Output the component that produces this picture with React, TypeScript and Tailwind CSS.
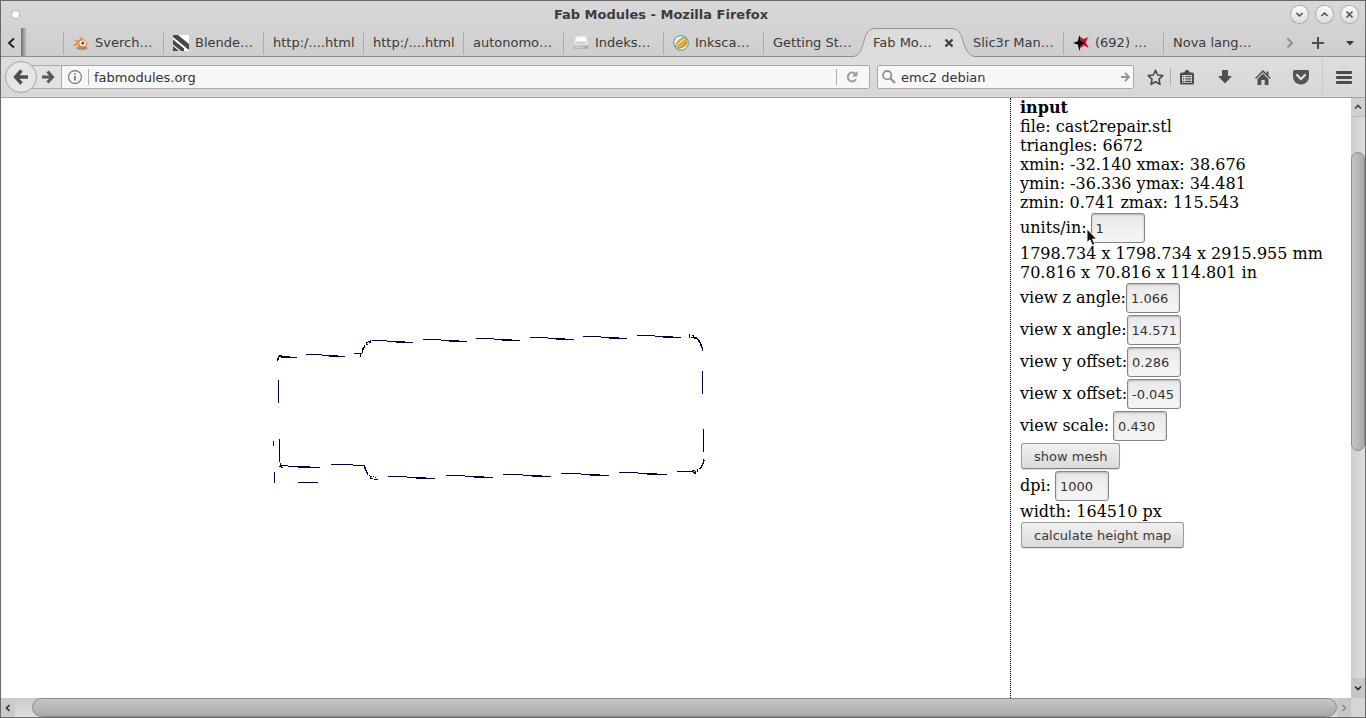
import { useState } from "react";
import type { ReactNode } from "react";

interface Tab {
  id: number;
  title: string;
  icon?: ReactNode;
  active?: boolean;
  separator?: boolean;
}

function BlenderIcon() {
  return (
    <svg width="16" height="16" viewBox="0 0 16 16" className="shrink-0">
      <ellipse cx="9" cy="13" rx="5.5" ry="1.8" fill="#8f8f8f" />
      <path
        d="M7.2 2 L13.2 6.2 Q15.6 9.4 12.4 11.8 Q8.5 13.6 5.3 11.2 L4.6 9.6 L1.6 11.5 L.4 10.2 L5 6.6 H1.8 V5.2 H8.2 L6 3 Z"
        fill="#ea8a30"
      />
      <ellipse cx="9.7" cy="8.2" rx="3.2" ry="2.8" fill="#fff" />
      <circle cx="9.8" cy="8.1" r="1.7" fill="#2a5f9c" />
    </svg>
  );
}

function StripesIcon() {
  return (
    <svg width="16" height="16" viewBox="0 0 16 16" className="shrink-0">
      <rect width="16" height="16" fill="#fff" />
      <path d="M0 0 H5 L16 9 V15 L0 2 Z" fill="#474747" />
      <path d="M0 4.5 L11 13.5 V16 H8 L0 9.5 Z" fill="#474747" />
      <path d="M0 11 L6 16 H0 Z" fill="#474747" />
    </svg>
  );
}

function DriveIcon() {
  return (
    <svg width="16" height="16" viewBox="0 0 16 16" className="shrink-0">
      <path d="M2.8 1 H13.2 L15.5 9.5 H.5 Z" fill="#e9e9e9" />
      <ellipse cx="8" cy="4.5" rx="5" ry="2.8" fill="#fafafa" />
      <ellipse cx="8" cy="7.6" rx="6" ry="1.2" fill="#cfcfcf" />
      <rect x=".4" y="9.3" width="15.2" height="4.7" rx="1" fill="#b4b4ba" />
      <rect x="1" y="9.3" width="14" height="1" fill="#f0f0f0" />
      <rect x="2" y="11.5" width="8" height="1.2" fill="#d8d8dc" />
      <rect x="12" y="11" width="2" height="2" fill="#6fc94a" />
    </svg>
  );
}

function InkIcon() {
  return (
    <svg width="16" height="16" viewBox="0 0 16 16" className="shrink-0">
      <circle cx="8" cy="8" r="7.3" fill="#f2f2ee" stroke="#3d93c0" strokeWidth="1" />
      <path
        d="M2.4 12.6 C2.2 7.5 7 2.4 12.6 2.2 C14.4 5 13 7.8 9.8 9.2 C7 10.4 4.5 11 2.4 12.6 Z"
        fill="#dcab35"
        stroke="#8c6a16"
        strokeWidth=".5"
      />
      <path d="M3.4 10.5 L11.6 3.8" stroke="#f6df95" strokeWidth="1.2" />
      <path d="M4.6 13 C8.6 12.6 12.2 10.8 13.8 7.2" stroke="#c08f20" strokeWidth="2" fill="none" />
    </svg>
  );
}

function StarsIcon() {
  return (
    <svg width="16" height="16" viewBox="0 0 16 16" className="shrink-0">
      <path d="M8 5 L7 1.5 L10.5 4 L15.5 2 L12.7 7 L15.8 13 L11 10.5 L7.5 13 Z" fill="#cf0a37" />
      <path d="M6.5 0 L8 6.3 L12 8 L8 9.5 L6.5 16 L4.8 9.5 L0 8 L4.8 6.3 Z" fill="#000" />
    </svg>
  );
}

const TABS: Tab[] = [
  { id: 1, title: "Sverch…", icon: <BlenderIcon />, separator: true },
  { id: 2, title: "Blende…", icon: <StripesIcon />, separator: true },
  { id: 3, title: "http:/....html", separator: true },
  { id: 4, title: "http:/....html", separator: true },
  { id: 5, title: "autonomo…", separator: true },
  { id: 6, title: "Indeks…", icon: <DriveIcon />, separator: true },
  { id: 7, title: "Inksca…", icon: <InkIcon />, separator: true },
  { id: 8, title: "Getting St…", separator: true },
  { id: 9, title: "Fab Mo…", active: true },
  { id: 10, title: "Slic3r Man…" },
  { id: 11, title: "(692) …", icon: <StarsIcon />, separator: true },
  { id: 12, title: "Nova lang…", separator: true },
];

function WindowButton({ label, d }: { label: string; d: string }) {
  return (
    <button aria-label={label} className="h-[17px] w-[17px] rounded-full bg-linear-to-b from-[#fbfbfb] to-[#dcdcdc] shadow-[0_0_0_1px_#a9a9a9]">
      <svg width="17" height="17" viewBox="0 0 17 17" fill="none" stroke="#4a4a4a" strokeWidth="1.5">
        <path d={d} />
      </svg>
    </button>
  );
}

function TitleBar() {
  return (
    <header className="flex h-[27px] shrink-0 items-center pr-[7px] pl-[11px]">
      <span className="h-[7px] w-[7px] rounded-full bg-white shadow-[0_0_1px_1px_#b5b5b5]" />
      <h1 className="flex-1 pl-3 text-center text-[13px] font-bold text-[#3c3c3c]">Fab Modules - Mozilla Firefox</h1>
      <div className="flex gap-2">
        <WindowButton label="Minimize" d="M5.5 7 L8.5 10 L11.5 7" />
        <WindowButton label="Maximize" d="M5.5 10 L8.5 7 L11.5 10" />
        <WindowButton label="Close" d="M5.5 5.5 L11.5 11.5 M11.5 5.5 L5.5 11.5" />
      </div>
    </header>
  );
}

function TabItem({ tab }: { tab: Tab }) {
  if (tab.active) {
    return (
      <li className="relative z-10 flex h-full w-[100px] shrink-0 items-center">
        <svg className="absolute top-0 -left-[10px]" width="122" height="30" viewBox="0 0 122 30">
          <path
            d="M0 28.5 C7 28 9 20 11 13 C13 5 16 .5 22 .5 H98 C105 .5 108 5 110 13 C112 20 115 28 122 28.5 V30 H0 Z"
            fill="#dcdcdc"
          />
          <path
            d="M0 28.5 C7 28 9 20 11 13 C13 5 16 .5 22 .5 H98 C105 .5 108 5 110 13 C112 20 115 28 122 28.5"
            fill="none"
            stroke="#8f9398"
          />
        </svg>
        <button className="relative flex-1 pt-[2px] pl-[10px] text-left">{tab.title}</button>
        <button aria-label="Close tab" className="relative mr-[9px] pt-[2px]">
          <svg width="10" height="10" viewBox="0 0 10 10" stroke="#444" strokeWidth="2.4">
            <path d="M1.5 1.5 L8.5 8.5 M8.5 1.5 L1.5 8.5" />
          </svg>
        </button>
      </li>
    );
  }
  return (
    <li className="flex h-full w-[100px] shrink-0 items-center">
      <span className={tab.separator ? "mt-[2px] h-[22px] w-px bg-[#ababab]" : "w-px"} />
      <button className="flex flex-1 items-center gap-[6px] pt-[2px] pl-[9px] whitespace-nowrap">
        {tab.icon}
        {tab.title}
      </button>
    </li>
  );
}

function TabStrip() {
  return (
    <nav className="flex h-[29px] shrink-0 border-b border-[#8e8e8e] text-[13px] text-[#3a3a3a]">
      <button aria-label="Scroll tabs left" className="flex w-5 items-center justify-center pt-[2px]">
        <svg width="10" height="12" viewBox="0 0 10 12" fill="none" stroke="#222" strokeWidth="2">
          <path d="M8 1.5 L3 6 L8 10.5" />
        </svg>
      </button>
      <span className="w-[6px] bg-linear-to-r from-[#6e6e6e] to-transparent" />
      <ul className="flex flex-1 pl-9">
        {TABS.map((tab) => (
          <TabItem key={tab.id} tab={tab} />
        ))}
      </ul>
      <div className="flex items-center pt-[2px]">
        <button aria-label="Scroll tabs right" className="flex w-7 justify-center">
          <svg width="10" height="12" viewBox="0 0 10 12" fill="none" stroke="#8f8f8f" strokeWidth="2">
            <path d="M2.5 1.5 L7 6 L2.5 10.5" />
          </svg>
        </button>
        <button aria-label="New tab" className="flex w-7 justify-center">
          <svg width="12" height="12" viewBox="0 0 12 12" stroke="#4c4c4c" strokeWidth="2">
            <path d="M6 0 V12 M0 6 H12" />
          </svg>
        </button>
        <button aria-label="List all tabs" className="flex w-[33px] justify-center pl-[3px]">
          <svg width="8" height="5" viewBox="0 0 8 5" fill="#2d3a48">
            <path d="M0 0 H8 L4 4.5 Z" />
          </svg>
        </button>
      </div>
    </nav>
  );
}

function NavBar() {
  const [url, setUrl] = useState("fabmodules.org");
  const [query, setQuery] = useState("emc2 debian");

  return (
    <div className="flex h-[41px] shrink-0 items-center border-b border-[#a5a5a5] bg-linear-to-b from-[#dedede] to-[#d7d7d7] pl-1 text-[13px] text-[#333]">
      <button aria-label="Back" className="z-10 flex h-8 w-8 shrink-0 items-center justify-center rounded-full border border-[#a3a3a3] bg-[#e6e6e6]">
        <svg width="16" height="16" viewBox="0 0 16 16" fill="none" stroke="#4d4d4d" strokeWidth="3.4">
          <path d="M8.5 1.5 L2.6 8 L8.5 14.5 M3 8 H15" />
        </svg>
      </button>
      <div className="-ml-2 flex h-6 flex-1 items-center rounded-r-xs border border-[#a9a9a9] bg-[#f7f7f7]">
        <button aria-label="Forward" className="flex h-full w-8 items-center justify-end border-r border-[#a9a9a9] bg-[#e2e2e2] pr-[6px]">
          <svg width="14" height="14" viewBox="0 0 14 14" fill="none" stroke="#5a5a5a" strokeWidth="3">
            <path d="M6.5 1.5 L11.6 7 L6.5 12.5 M1 7 H11.5" />
          </svg>
        </button>
        <button aria-label="Site information" className="flex h-4 w-[27px] items-center justify-center border-r border-[#b0b0b0]">
          <svg width="14" height="14" viewBox="0 0 14 14" fill="none" stroke="#707070">
            <circle cx="7" cy="7" r="6.4" strokeWidth="1.1" />
            <path d="M7 6 V10.5 M7 3.2 V4.8" strokeWidth="1.7" />
          </svg>
        </button>
        <input
          aria-label="Address"
          className="min-w-0 flex-1 bg-transparent pt-[2px] pl-[5px] outline-none"
          value={url}
          onChange={(e) => setUrl(e.target.value)}
        />
        <button aria-label="Reload" className="flex h-4 w-[33px] items-center justify-center border-l border-[#b0b0b0] pr-[2px]">
          <svg width="12" height="12" viewBox="0 0 12 12" fill="none" stroke="#93a0ab" strokeWidth="2">
            <path d="M9.2 2.8 A4.4 4.4 0 1 0 10 8.2" />
            <path d="M11.5 0 V5.5 H6 Z" fill="#93a0ab" stroke="none" />
          </svg>
        </button>
      </div>

      <div className="ml-[7px] flex h-6 w-[257px] shrink-0 items-center rounded-xs border border-[#a9a9a9] bg-[#f7f7f7]">
        <svg width="14" height="14" viewBox="0 0 14 14" fill="none" stroke="#949494" className="ml-1 shrink-0">
          <circle cx="5.2" cy="5.2" r="4.2" strokeWidth="1.8" />
          <path d="M8.4 8.4 L13 13" strokeWidth="2.4" />
        </svg>
        <input
          aria-label="Search"
          className="min-w-0 flex-1 bg-transparent pt-[2px] pl-[5px] outline-none"
          value={query}
          onChange={(e) => setQuery(e.target.value)}
        />
        <button aria-label="Go" className="mr-[3px]">
          <svg width="9" height="10" viewBox="0 0 9 10" fill="none" stroke="#8696a5" strokeWidth="1.8">
            <path d="M4 1 L8 5 L4 9 M0 5 H8" />
          </svg>
        </button>
      </div>

      <button aria-label="Bookmark this page" className="ml-2 flex w-7 justify-center pr-px">
        <svg width="17" height="17" viewBox="0 0 17 17" fill="none" stroke="#4b4b4b" strokeWidth="1.6" strokeLinejoin="round">
          <path d="M8.5 1.3 L10.7 6 L15.8 6.6 L12 10.1 L13 15.3 L8.5 12.7 L4 15.3 L5 10.1 L1.2 6.6 L6.3 6 Z" />
        </svg>
      </button>
      <span className="h-[18px] w-px bg-[#b0b0b0]" />
      <button aria-label="Show bookmarks" className="flex w-[35px] justify-center pr-[3px]">
        <svg width="14" height="15" viewBox="0 0 14 15">
          <path d="M4 2.5 L6 0 H8 L10 2.5 H12.5 Q14 2.5 14 4 V13 Q14 14.5 12.5 14.5 H1.5 Q0 14.5 0 13 V4 Q0 2.5 1.5 2.5 Z" fill="#4b4b4b" />
          <path d="M2 5 H12 V12.7 H2 Z" fill="#dcdcdc" />
          <path d="M2.7 6.5 H4.2 M5.2 6.5 H11.4 M2.7 8.9 H4.2 M5.2 8.9 H11.4 M2.7 11.3 H4.2 M5.2 11.3 H11.4" stroke="#4b4b4b" strokeWidth="1.2" />
        </svg>
      </button>
      <button aria-label="Downloads" className="flex w-[38px] justify-center">
        <svg width="14" height="14" viewBox="0 0 14 14" fill="#505050">
          <path d="M4 0 H10 V6 H14 L7 13.5 L0 6 H4 Z" />
        </svg>
      </button>
      <button aria-label="Home" className="flex w-[38px] justify-center">
        <svg width="16" height="15" viewBox="0 0 16 15" fill="#505050">
          <path d="M8 0 L11.5 3.5 V1.5 H13.5 V5.5 L16 8 L15 9 L8 2.2 L1 9 L0 8 Z" />
          <path d="M8 3.6 L13.5 9 V15 H9.7 V10 H6.3 V15 H2.5 V9 Z" />
        </svg>
      </button>
      <button aria-label="Save to Pocket" className="flex w-[38px] justify-center">
        <svg width="16" height="15" viewBox="0 0 16 15">
          <path d="M1.5 0 H14.5 Q16 0 16 1.5 V6.5 A8 8 0 0 1 0 6.5 V1.5 Q0 0 1.5 0 Z" fill="#555" />
          <path d="M4 5 L8 9 L12 5" fill="none" stroke="#e4e4e4" strokeWidth="2.2" strokeLinecap="round" />
        </svg>
      </button>
      <span className="ml-[2px] h-[34px] w-px bg-[#c8c8c8]" />
      <button aria-label="Open menu" className="flex w-[42px] justify-center">
        <svg width="16" height="13" viewBox="0 0 16 13" fill="#4a4a4a">
          <rect width="16" height="3" rx="1" />
          <rect y="5" width="16" height="3" rx="1" />
          <rect y="10" width="16" height="3" rx="1" />
        </svg>
      </button>
    </div>
  );
}

// [x, y, length] runs of the mesh outline
const HORIZONTAL = [
  [279, 355, 3], [278, 356, 12], [281, 357, 16],
  [306, 354, 16], [322, 355, 16], [329, 356, 16], [354, 353, 8],
  [372, 340, 15], [387, 341, 18], [396, 342, 17],
  [423, 339, 18], [441, 340, 18], [449, 341, 18],
  [476, 338, 18], [494, 339, 18], [502, 340, 18],
  [530, 337, 18], [548, 338, 17], [556, 339, 18],
  [583, 336, 18], [601, 337, 18], [609, 338, 18],
  [637, 335, 18], [655, 336, 18], [663, 337, 18],
  [691, 337, 6], [692, 335, 2], [693, 336, 1], [694, 338, 4], [697, 339, 2],
  [280, 465, 8], [288, 466, 22], [298, 467, 22], [279, 466, 3], [281, 467, 2],
  [331, 464, 22], [353, 465, 12], [298, 482, 20],
  [388, 476, 19], [407, 477, 19], [416, 478, 19],
  [446, 475, 19], [465, 476, 19], [474, 477, 19],
  [503, 474, 20], [523, 475, 19], [532, 476, 19],
  [561, 473, 20], [581, 474, 19], [590, 475, 19],
  [619, 472, 19], [638, 473, 19], [647, 474, 20],
  [677, 471, 17], [692, 470, 3], [693, 472, 3], [694, 473, 2], [695, 471, 1],
  [370, 340, 1], [368, 341, 2], [366, 342, 2], [367, 344, 1], [369, 342, 1],
  [367, 474, 1], [369, 475, 1], [371, 476, 1], [371, 478, 2], [374, 479, 4], [373, 476, 1], [375, 477, 1],
];

const VERTICAL = [
  [278, 356, 4], [277, 358, 3], [360, 353, 4],
  [362, 348, 5], [363, 347, 3], [364, 345, 3], [366, 343, 2], [370, 341, 2],
  [278, 380, 23], [279, 439, 23], [273, 441, 5], [274, 472, 11],
  [280, 463, 3], [364, 465, 4], [365, 467, 4], [366, 470, 3], [367, 472, 3], [370, 476, 3],
  [689, 334, 4], [698, 339, 3], [699, 340, 3], [700, 342, 4], [701, 344, 4], [702, 347, 4],
  [702, 371, 23], [703, 429, 23],
  [703, 459, 5], [704, 460, 1], [702, 463, 3], [701, 465, 3], [700, 467, 2], [699, 468, 1], [697, 469, 3],
];

function MeshCanvas() {
  return (
    <svg className="h-full w-full" viewBox="1 98 1009 600" preserveAspectRatio="xMinYMin meet" shapeRendering="crispEdges" fill="#000040">
      {HORIZONTAL.map(([x, y, length]) => (
        <rect key={`h${x}-${y}`} x={x} y={y} width={length} height="1" />
      ))}
      {VERTICAL.map(([x, y, length]) => (
        <rect key={`v${x}-${y}`} x={x} y={y} width="1" height={length} />
      ))}
    </svg>
  );
}

function Field({ id, label, value, spaced }: { id: string; label: string; value: string; spaced?: boolean }) {
  const [text, setText] = useState(value);
  return (
    <div className="flex h-8 items-center">
      <label htmlFor={id} className={spaced ? "mr-1 pb-[2px]" : "pb-[2px]"}>
        {label}
      </label>
      <input
        id={id}
        value={text}
        onChange={(e) => setText(e.target.value)}
        className="h-[30px] w-[54px] rounded-[3px] border border-[#858585] bg-linear-to-b from-[#e8e8e8] to-[#f6f6f6] px-1 font-['DejaVu_Sans',sans-serif] text-[13px] text-[#333] shadow-[inset_0_1px_2px_#b5b5b5] outline-none"
      />
    </div>
  );
}

function PanelButton({ children }: { children: ReactNode }) {
  return (
    <button className="my-px ml-px block h-[26px] rounded-[3px] border border-[#9a9a9a] border-b-[#808080] bg-linear-to-b from-[#f1f1f1] to-[#dadada] px-3 pt-[2px] font-['DejaVu_Sans',sans-serif] text-[13px] leading-4 text-[#3a3a3a] shadow-[0_1px_1px_#dddddd]">
      {children}
    </button>
  );
}

function InputPanel() {
  return (
    <aside className="w-[341px] shrink-0 border-l border-dotted border-black pl-[9px] font-['DejaVu_Serif',serif] text-base leading-[19px] text-black">
      <h2 className="font-bold">input</h2>
      <p>file: cast2repair.stl</p>
      <p>triangles: 6672</p>
      <p>xmin: -32.140 xmax: 38.676</p>
      <p>ymin: -36.336 ymax: 34.481</p>
      <p>zmin: 0.741 zmax: 115.543</p>
      <div className="relative">
        <Field id="units" label="units/in:" value="1" spaced />
        {/* mouse pointer */}
        <svg className="absolute top-4 left-[66px]" width="12" height="19" viewBox="0 0 12 19">
          <path d="M1 1 V14.5 L4 11.8 L6.3 17.3 L8.8 16.2 L6.5 11 H10.6 Z" fill="#111" stroke="#fff" strokeWidth=".9" />
        </svg>
      </div>
      <p>1798.734 x 1798.734 x 2915.955 mm</p>
      <p>70.816 x 70.816 x 114.801 in</p>
      <Field id="rz" label="view z angle:" value="1.066" />
      <Field id="rx" label="view x angle:" value="14.571" />
      <Field id="dy" label="view y offset:" value="0.286" />
      <Field id="dx" label="view x offset:" value="-0.045" />
      <Field id="scale" label="view scale:" value="0.430" spaced />
      <PanelButton>show mesh</PanelButton>
      <Field id="dpi" label="dpi:" value="1000" spaced />
      <p>width: 164510 px</p>
      <PanelButton>calculate height map</PanelButton>
    </aside>
  );
}

function Arrow({ d, color }: { d: string; color: string }) {
  return (
    <svg width="8" height="8" viewBox="0 0 8 8" fill="none" stroke={color} strokeWidth="1.6">
      <path d={d} />
    </svg>
  );
}

function VerticalScrollbar() {
  return (
    <div className="flex w-[14px] shrink-0 flex-col bg-linear-to-r from-[#cdcdcd] to-[#dedede]">
      <button aria-label="Scroll up" className="flex h-[19px] items-center justify-center border-b border-[#bdbdbd] bg-[#d0d0d0]">
        <Arrow d="M1 5.5 L4 2.5 L7 5.5" color="#3c3c3c" />
      </button>
      <div className="flex-[35]" />
      <div className="flex-[298] rounded-full border border-[#8b8b8b] bg-linear-to-r from-[#c6c6c6] to-[#a9a9a9]" />
      <div className="flex-[228]" />
      <button aria-label="Scroll down" className="flex h-5 items-center justify-center bg-[#c6c6c6]">
        <Arrow d="M1 2.5 L4 5.5 L7 2.5" color="#2b2b2b" />
      </button>
    </div>
  );
}

function HorizontalScrollbar() {
  return (
    <div className="flex h-[19px] shrink-0 bg-linear-to-b from-[#cbcbcb] to-[#dedede]">
      <button aria-label="Scroll left" className="flex w-[14px] items-center justify-center bg-[#cacaca]">
        <Arrow d="M5.5 1 L2.5 4 L5.5 7" color="#2b2b2b" />
      </button>
      <div className="w-[17px]" />
      <div className="flex-1 rounded-full border border-[#8b8b8b] bg-linear-to-b from-[#c6c6c6] to-[#a9a9a9]" />
      <button aria-label="Scroll right" className="flex w-[14px] items-center justify-center bg-[#c6c6c6]">
        <Arrow d="M2.5 1 L5.5 4 L2.5 7" color="#8a8a8a" />
      </button>
      <div className="w-[14px] bg-[#d6d6d6]" />
    </div>
  );
}

export default function App() {
  return (
    <div className="flex h-screen flex-col overflow-hidden border border-[#696969] bg-white font-['DejaVu_Sans',sans-serif]">
      <div className="shrink-0 bg-linear-to-b from-[#d8d8d8] to-[#cecece]">
        <TitleBar />
        <TabStrip />
      </div>
      <NavBar />
      <div className="flex min-h-0 flex-1">
        <main className="min-w-0 flex-1">
          <MeshCanvas />
        </main>
        <InputPanel />
        <VerticalScrollbar />
      </div>
      <HorizontalScrollbar />
    </div>
  );
}
